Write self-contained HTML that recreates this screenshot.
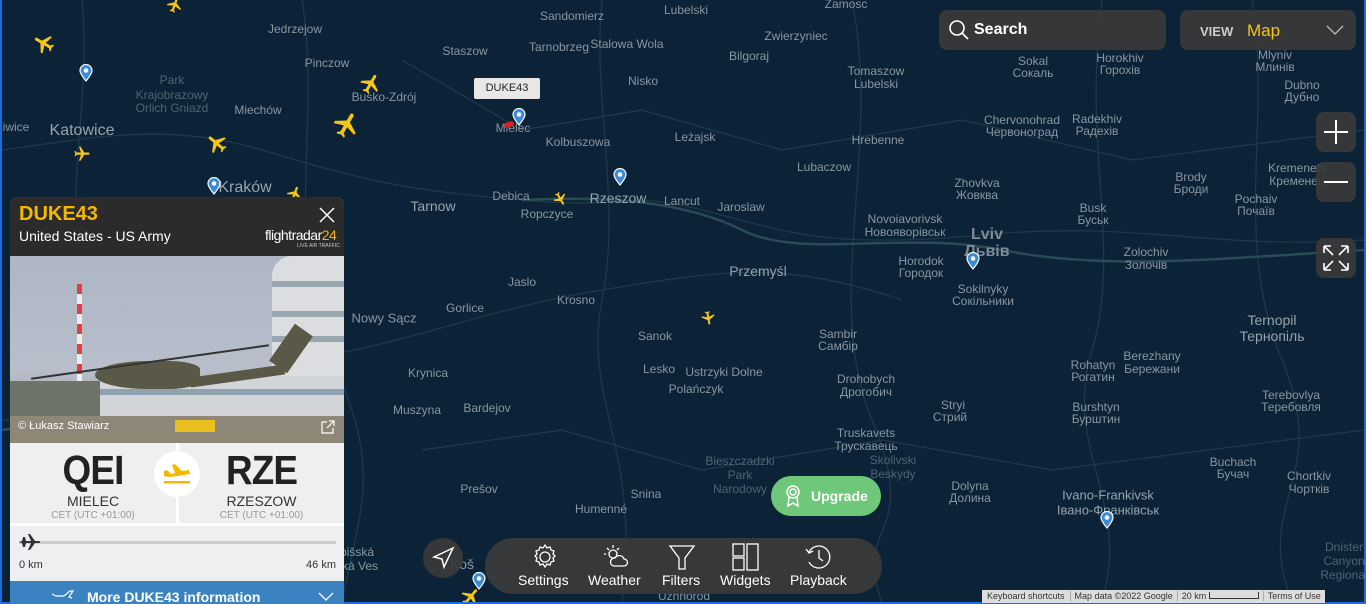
<!DOCTYPE html>
<html><head><meta charset="utf-8"><style>
*{margin:0;padding:0;box-sizing:border-box}
body{width:1366px;height:604px;overflow:hidden;background:#1a6ee0;font-family:"Liberation Sans","DejaVu Sans",sans-serif}
#map{position:absolute;left:2px;top:0;width:1362px;height:602px;background:#0c2337;overflow:hidden}
.l{position:absolute;transform:translate(-50%,-50%);color:#8a96a0;font-size:12px;white-space:nowrap;line-height:1}
.b{font-size:16px;color:#97a3ad}
.m{font-size:14px;color:#97a3ad}
.pin{position:absolute;width:14px;height:18px}
.pl{position:absolute;width:24px;height:24px}
.ctl{position:absolute;background:rgba(58,58,58,.9);border-radius:8px}
</style></head><body>
<div id="map">
<svg width="1362" height="602" style="position:absolute;left:0;top:0" fill="none">
<g stroke="#1f3a4a" stroke-width="1.2">
<path d="M0 150 C80 140 160 120 260 150 S400 190 520 200 S620 190 700 210 S820 250 980 235 S1200 250 1362 240"/>
<path d="M0 420 C100 410 180 380 300 360 S480 310 600 290 S780 260 900 300"/>
<path d="M80 0 C90 100 60 200 80 300 S60 500 70 602"/>
<path d="M300 0 C320 120 280 250 330 360 S360 500 340 602"/>
<path d="M600 0 C590 100 620 200 600 300 S640 450 620 602"/>
<path d="M850 0 C880 150 820 300 870 420 S850 520 880 602"/>
<path d="M1100 0 C1080 150 1120 250 1090 350 S1130 500 1100 602"/>
<path d="M1250 0 C1270 120 1230 240 1280 360 S1250 500 1290 602"/>
<path d="M400 60 L520 130 L640 110 L780 150 L960 120 L1130 160 L1362 130"/>
<path d="M420 450 L560 430 L700 470 L880 440 L1050 470 L1362 430"/>
</g>
<g stroke="#2a4a55" stroke-width="2.5"><path d="M520 200 C600 196 680 200 740 230 S900 230 1000 250 S1200 260 1362 250"/><path d="M0 430 C80 420 150 400 220 410"/></g>
</svg>
<div class="l" style="left:570px;top:16px">Sandomierz</div>
<div class="l" style="left:684px;top:10px">Lubelski</div>
<div class="l" style="left:844px;top:4px">Zamosc</div>
<div class="l" style="left:293px;top:29px">Jedrzejow</div>
<div class="l" style="left:463px;top:51px">Staszow</div>
<div class="l" style="left:557px;top:47px">Tarnobrzeg</div>
<div class="l" style="left:625px;top:44px">Stalowa Wola</div>
<div class="l" style="left:794px;top:36px">Zwierzyniec</div>
<div class="l" style="left:747px;top:56px">Bilgoraj</div>
<div class="l" style="left:325px;top:63px">Pinczow</div>
<div class="l" style="left:641px;top:81px">Nisko</div>
<div class="l" style="left:874px;top:71px">Tomaszow</div>
<div class="l" style="left:874px;top:84px">Lubelski</div>
<div class="l" style="left:170px;top:80px;color:#4f6370">Park</div>
<div class="l" style="left:170px;top:95px;color:#4f6370">Krajobrazowy</div>
<div class="l" style="left:170px;top:108px;color:#4f6370">Orlich Gniazd</div>
<div class="l" style="left:382px;top:97px">Busko-Zdrój</div>
<div class="l" style="left:256px;top:110px">Miechów</div>
<div class="l b" style="left:80px;top:131px">Katowice</div>
<div class="l" style="left:14px;top:127px">iwice</div>
<div class="l" style="left:511px;top:128px">Mielec</div>
<div class="l" style="left:576px;top:142px">Kolbuszowa</div>
<div class="l" style="left:693px;top:137px">Leżajsk</div>
<div class="l" style="left:876px;top:140px">Hrebenne</div>
<div class="l" style="left:822px;top:167px">Lubaczow</div>
<div class="l m" style="left:616px;top:198px">Rzeszow</div>
<div class="l" style="left:680px;top:201px">Lancut</div>
<div class="l" style="left:739px;top:207px">Jaroslaw</div>
<div class="l b" style="left:243px;top:188px">Kraków</div>
<div class="l" style="left:509px;top:196px">Debica</div>
<div class="l" style="left:545px;top:214px">Ropczyce</div>
<div class="l m" style="left:431px;top:206px">Tarnow</div>
<div class="l" style="left:903px;top:219px">Novoiavorivsk</div>
<div class="l" style="left:903px;top:232px">Новояворівськ</div>
<div class="l m" style="left:756px;top:271px">Przemyśl</div>
<div class="l" style="left:919px;top:261px">Horodok</div>
<div class="l" style="left:919px;top:273px">Городок</div>
<div class="l" style="left:520px;top:282px">Jaslo</div>
<div class="l" style="left:574px;top:300px">Krosno</div>
<div class="l" style="left:463px;top:308px">Gorlice</div>
<div class="l" style="left:382px;top:318px;font-size:13px">Nowy Sącz</div>
<div class="l" style="left:653px;top:336px">Sanok</div>
<div class="l" style="left:836px;top:334px">Sambir</div>
<div class="l" style="left:836px;top:346px">Самбір</div>
<div class="l" style="left:657px;top:369px">Lesko</div>
<div class="l" style="left:722px;top:372px">Ustrzyki Dolne</div>
<div class="l" style="left:694px;top:389px">Polańczyk</div>
<div class="l" style="left:864px;top:379px">Drohobych</div>
<div class="l" style="left:864px;top:392px">Дрогобич</div>
<div class="l" style="left:951px;top:405px">Stryi</div>
<div class="l" style="left:948px;top:417px">Стрий</div>
<div class="l" style="left:426px;top:373px">Krynica</div>
<div class="l" style="left:415px;top:410px">Muszyna</div>
<div class="l" style="left:485px;top:408px">Bardejov</div>
<div class="l" style="left:864px;top:433px">Truskavets</div>
<div class="l" style="left:864px;top:446px">Трускавець</div>
<div class="l" style="left:891px;top:460px;color:#4f6370">Skolivski</div>
<div class="l" style="left:891px;top:474px;color:#4f6370">Beskydy</div>
<div class="l" style="left:738px;top:461px;color:#4f6370">Bieszczadzki</div>
<div class="l" style="left:738px;top:475px;color:#4f6370">Park</div>
<div class="l" style="left:738px;top:489px;color:#4f6370">Narodowy</div>
<div class="l" style="left:477px;top:489px">Prešov</div>
<div class="l" style="left:644px;top:494px">Snina</div>
<div class="l" style="left:599px;top:509px">Humenné</div>
<div class="l" style="left:968px;top:486px">Dolyna</div>
<div class="l" style="left:968px;top:498px">Долина</div>
<div class="l" style="left:1106px;top:495px;font-size:13px;color:#97a3ad">Ivano-Frankivsk</div>
<div class="l" style="left:1106px;top:510px;font-size:13px;color:#97a3ad">Івано-Франківськ</div>
<div class="l" style="left:1031px;top:61px">Sokal</div>
<div class="l" style="left:1031px;top:73px">Сокаль</div>
<div class="l" style="left:1118px;top:58px">Horokhiv</div>
<div class="l" style="left:1118px;top:70px">Горохів</div>
<div class="l" style="left:1300px;top:85px">Dubno</div>
<div class="l" style="left:1300px;top:97px">Дубно</div>
<div class="l" style="left:1273px;top:55px">Mlyniv</div>
<div class="l" style="left:1273px;top:67px">Млинів</div>
<div class="l" style="left:1020px;top:120px">Chervonohrad</div>
<div class="l" style="left:1020px;top:132px">Червоноград</div>
<div class="l" style="left:1095px;top:119px">Radekhiv</div>
<div class="l" style="left:1095px;top:131px">Радехів</div>
<div class="l" style="left:975px;top:183px">Zhovkva</div>
<div class="l" style="left:975px;top:195px">Жовква</div>
<div class="l" style="left:1091px;top:208px">Busk</div>
<div class="l" style="left:1091px;top:220px">Буськ</div>
<div class="l b" style="left:985px;top:235px;font-weight:bold;color:#7d8b96">Lviv</div>
<div class="l b" style="left:985px;top:252px;font-weight:bold;color:#7d8b96">Львів</div>
<div class="l" style="left:1189px;top:177px">Brody</div>
<div class="l" style="left:1189px;top:189px">Броди</div>
<div class="l" style="left:1295px;top:168px">Kremenets</div>
<div class="l" style="left:1295px;top:181px">Кременец</div>
<div class="l" style="left:1254px;top:199px">Pochaiv</div>
<div class="l" style="left:1254px;top:211px">Почаїв</div>
<div class="l" style="left:1144px;top:252px">Zolochiv</div>
<div class="l" style="left:1144px;top:265px">Золочів</div>
<div class="l" style="left:981px;top:289px">Sokilnyky</div>
<div class="l" style="left:981px;top:301px">Сокільники</div>
<div class="l m" style="left:1270px;top:320px">Ternopil</div>
<div class="l m" style="left:1270px;top:336px">Тернопіль</div>
<div class="l" style="left:1150px;top:356px">Berezhany</div>
<div class="l" style="left:1150px;top:369px">Бережани</div>
<div class="l" style="left:1091px;top:365px">Rohatyn</div>
<div class="l" style="left:1091px;top:377px">Рогатин</div>
<div class="l" style="left:1289px;top:395px">Terebovlya</div>
<div class="l" style="left:1289px;top:407px">Теребовля</div>
<div class="l" style="left:1094px;top:407px">Burshtyn</div>
<div class="l" style="left:1094px;top:419px">Бурштин</div>
<div class="l" style="left:1231px;top:462px">Buchach</div>
<div class="l" style="left:1231px;top:474px">Бучач</div>
<div class="l" style="left:1307px;top:476px">Chortkiv</div>
<div class="l" style="left:1307px;top:489px">Чортків</div>
<div class="l" style="left:1342px;top:547px;color:#4f6370">Dnister</div>
<div class="l" style="left:1342px;top:561px;color:#4f6370">Canyon</div>
<div class="l" style="left:1342px;top:575px;color:#4f6370">Regional</div>
<div class="l" style="left:682px;top:596px">Uzhhorod</div>
<div class="l" style="left:460px;top:564px;font-size:14px">Koš</div>
<div class="l" style="left:355px;top:552px">pišská</div>
<div class="l" style="left:355px;top:566px">ská Ves</div>

<svg width="0" height="0" style="position:absolute"><defs>
<symbol id="p" viewBox="0 0 24 24"><path fill="#f5c518" d="M21 16v-2l-8-5V3.5a1.5 1.5 0 0 0-3 0V9l-8 5v2l8-2.5V19l-2 1.5V22l3.5-1 3.5 1v-1.5L13 19v-5.5z"/></symbol>
<symbol id="pn" viewBox="0 0 14 18"><path fill="#3a8ad8" stroke="#fff" stroke-width="1.2" d="M7 17C7 17 1 10 1 6.5a6 6 0 0 1 12 0C13 10 7 17 7 17z"/><circle cx="7" cy="6.5" r="2.3" fill="#fff"/></symbol>
</defs></svg>
<svg class="pl" style="left:30px;top:31px;transform:rotate(-60deg)"><use href="#p"/></svg>
<svg class="pl" style="left:164px;top:-4px;width:18px;height:18px;transform:rotate(20deg)"><use href="#p"/></svg>
<svg class="pl" style="left:357px;top:72px;transform:rotate(30deg)"><use href="#p"/></svg>
<svg class="pl" style="left:330px;top:110px;width:30px;height:30px;transform:rotate(30deg)"><use href="#p"/></svg>
<svg class="pl" style="left:203px;top:131px;transform:rotate(-50deg)"><use href="#p"/></svg>
<svg class="pl" style="left:71px;top:145px;width:18px;height:18px;transform:rotate(90deg)"><use href="#p"/></svg>
<svg class="pl" style="left:284px;top:185px;width:18px;height:18px;transform:rotate(20deg)"><use href="#p"/></svg>
<svg class="pl" style="left:550px;top:191px;width:16px;height:16px;transform:rotate(150deg)"><use href="#p"/></svg>
<svg class="pl" style="left:698px;top:310px;width:16px;height:16px;transform:rotate(170deg)"><use href="#p"/></svg>
<svg class="pl" style="left:458px;top:586px;width:22px;height:22px;transform:rotate(40deg)"><use href="#p"/></svg>
<svg class="pin" style="left:77px;top:64px"><use href="#pn"/></svg>
<svg class="pin" style="left:205px;top:177px"><use href="#pn"/></svg>
<svg class="pin" style="left:510px;top:108px"><use href="#pn"/></svg>
<svg class="pin" style="left:611px;top:168px"><use href="#pn"/></svg>
<svg class="pin" style="left:964px;top:252px"><use href="#pn"/></svg>
<svg class="pin" style="left:1098px;top:511px"><use href="#pn"/></svg>
<svg class="pin" style="left:470px;top:572px"><use href="#pn"/></svg>
<div style="position:absolute;left:472px;top:78px;width:66px;height:21px;background:#e8e8e8;color:#222;font-size:11px;text-align:center;line-height:21px;border-radius:2px">DUKE43</div>
<div style="position:absolute;left:502px;top:122px;width:10px;height:5px;background:#e02020;border-radius:3px;transform:rotate(-20deg)"></div>
</div>

<div class="ctl" style="left:939px;top:10px;width:227px;height:40px">
<svg width="22" height="22" style="position:absolute;left:9px;top:9px" fill="none" stroke="#fff" stroke-width="1.6"><circle cx="9" cy="9" r="7"/><path d="M14 14l6 6"/></svg>
<div style="position:absolute;left:35px;top:11px;color:#fff;font-weight:bold;font-size:16px">Search</div></div>
<div class="ctl" style="left:1180px;top:10px;width:176px;height:40px">
<div style="position:absolute;left:20px;top:14px;color:#ccc;font-weight:bold;font-size:13px">VIEW</div>
<div style="position:absolute;left:67px;top:11px;color:#f5c518;font-size:17px">Map</div>
<svg width="18" height="10" style="position:absolute;left:146px;top:15px" fill="none" stroke="#bbb" stroke-width="1.3"><path d="M1 1l8 8 8-8"/></svg></div>
<div class="ctl" style="left:1316px;top:112px;width:40px;height:40px"><svg width="40" height="40" stroke="#fff" stroke-width="2"><path d="M8 20h24M20 8v24"/></svg></div>
<div class="ctl" style="left:1316px;top:162px;width:40px;height:40px"><svg width="40" height="40" stroke="#fff" stroke-width="2"><path d="M8 20h24"/></svg></div>
<div class="ctl" style="left:1316px;top:238px;width:40px;height:40px"><svg width="40" height="40" fill="none" stroke="#fff" stroke-width="1.6"><path d="M8 8l9 9M8 8h7M8 8v7M32 8l-9 9M32 8h-7M32 8v7M8 32l9-9M8 32h7M8 32v-7M32 32l-9-9M32 32h-7M32 32v-7"/></svg></div>

<div style="position:absolute;left:771px;top:476px;width:110px;height:40px;background:#6fc77a;border-radius:20px;color:#fff;font-weight:bold;font-size:14px">
<svg width="20" height="24" style="position:absolute;left:12px;top:8px" fill="none" stroke="#fff" stroke-width="1.5"><circle cx="10" cy="8" r="6"/><circle cx="10" cy="8" r="3"/><path d="M6 13l-1 9 5-3 5 3-1-9"/></svg>
<span style="position:absolute;left:40px;top:12px">Upgrade</span></div>

<div style="position:absolute;left:423px;top:538px;width:40px;height:40px;border-radius:20px;background:rgba(58,58,58,.9)"><svg width="40" height="40" fill="none" stroke="#fff" stroke-width="1.5"><path d="M30 10L11 19l8 2 2 8z"/></svg></div>
<div style="position:absolute;left:485px;top:538px;width:397px;height:56px;border-radius:28px;background:rgba(58,58,58,.95);color:#fff;font-size:14px">
<svg width="30" height="30" style="position:absolute;left:45px;top:4px" fill="none" stroke="#fff" stroke-width="1.3"><circle cx="15" cy="15" r="5"/><path d="M15 3l2 3 3-1 1 3 3 1-1 3 2 2-2 2 1 3-3 1-1 3-3-1-2 3-2-3-3 1-1-3-3-1 1-3-2-2 2-2-1-3 3-1 1-3 3 1z"/></svg>
<span style="position:absolute;left:33px;top:34px">Settings</span>
<svg width="30" height="30" style="position:absolute;left:117px;top:4px" fill="none" stroke="#fff" stroke-width="1.3"><circle cx="11" cy="12" r="4"/><path d="M11 3v3M4 12H2M5 6l2 2M17 6l-2 2"/><path d="M12 24a4 4 0 0 1 1-8 5 5 0 0 1 9 1 3 3 0 0 1 0 7z"/></svg>
<span style="position:absolute;left:103px;top:34px">Weather</span>
<svg width="30" height="30" style="position:absolute;left:182px;top:4px" fill="none" stroke="#fff" stroke-width="1.3"><path d="M3 4h24L18 16v11h-6V16z"/></svg>
<span style="position:absolute;left:177px;top:34px">Filters</span>
<svg width="30" height="30" style="position:absolute;left:246px;top:4px" fill="none" stroke="#fff" stroke-width="1.3"><rect x="2" y="2" width="11" height="12"/><rect x="2" y="16" width="11" height="12"/><rect x="16" y="2" width="11" height="26"/></svg>
<span style="position:absolute;left:235px;top:34px">Widgets</span>
<svg width="30" height="30" style="position:absolute;left:319px;top:4px" fill="none" stroke="#fff" stroke-width="1.3"><path d="M5 10a11 11 0 1 1 0 10"/><path d="M2 7l3 4 4-2M15 8v8l4 3"/></svg>
<span style="position:absolute;left:305px;top:34px">Playback</span></div>

<div style="position:absolute;left:982px;top:590px;height:13px;background:#ddd;color:#333;font-size:9px;line-height:13px;white-space:nowrap">
<span style="padding:0 5px;border-right:1px solid #aaa">Keyboard shortcuts</span><span style="padding:0 4px;border-right:1px solid #aaa">Map data ©2022 Google</span><span style="padding:0 4px;border-right:1px solid #aaa">20 km <span style="display:inline-block;width:50px;height:7px;border:1px solid #333;border-top:0"></span></span><span style="padding:0 4px">Terms of Use</span></div>

<div style="position:absolute;left:10px;top:197px;width:334px;height:407px;overflow:hidden;border-radius:8px 8px 0 0;background:#eee">
<div style="height:59px;background:#2b2b2b;position:relative">
<div style="position:absolute;left:9px;top:6px;color:#f5b800;font-size:20px;font-weight:bold">DUKE43</div>
<div style="position:absolute;left:9px;top:31px;color:#fff;font-size:14px">United States - US Army</div>
<svg width="16" height="16" style="position:absolute;left:309px;top:10px" stroke="#fff" stroke-width="1.5"><path d="M1 1l14 14M15 1L1 15"/></svg>
<div style="position:absolute;left:255px;top:30px;color:#fff;font-size:14px;letter-spacing:-.5px">flightradar<span style="color:#f5b800">24</span></div>
<div style="position:absolute;left:287px;top:46px;color:#ccc;font-size:5px">LIVE AIR TRAFFIC</div></div>
<div style="height:187px;position:relative;background:linear-gradient(#aeb6c4 0%,#b8bfcb 60%,#a8aaa8 85%,#8a8270 100%);overflow:hidden">
<div style="position:absolute;left:262px;top:0;width:72px;height:170px;background:#dcdde0;border-radius:20px 0 0 0"></div>
<div style="position:absolute;left:262px;top:25px;width:72px;height:6px;background:#9aa6b0"></div>
<div style="position:absolute;left:262px;top:55px;width:72px;height:6px;background:#9aa6b0"></div>
<div style="position:absolute;left:262px;top:80px;width:72px;height:6px;background:#9aa6b0"></div>
<div style="position:absolute;left:90px;top:120px;width:244px;height:45px;background:#d2d5d8"></div>
<div style="position:absolute;left:90px;top:133px;width:244px;height:6px;background:#8fa2b0"></div>
<div style="position:absolute;left:67px;top:28px;width:5px;height:140px;background:repeating-linear-gradient(#e04040 0 10px,#eee 10px 20px)"></div>
<div style="position:absolute;left:0;top:125px;width:90px;height:45px;background:#6d7468"></div>
<div style="position:absolute;left:0;top:160px;width:334px;height:27px;background:#8e8778"></div>
<div style="position:absolute;left:85px;top:105px;width:105px;height:28px;background:#5a5846;border-radius:50% 30% 30% 50%"></div>
<div style="position:absolute;left:180px;top:115px;width:95px;height:10px;background:#5a5846;transform:rotate(-8deg)"></div>
<div style="position:absolute;left:270px;top:70px;width:22px;height:45px;background:#5a5846;transform:rotate(35deg)"></div>
<div style="position:absolute;left:20px;top:105px;width:240px;height:2px;background:#333;transform:rotate(-8deg)"></div>
<div style="position:absolute;left:8px;top:164px;color:#fff;font-size:11px">© Łukasz Stawiarz</div>
<div style="position:absolute;left:165px;top:164px;width:40px;height:12px;background:#e8c020"></div>
<svg width="14" height="14" style="position:absolute;left:311px;top:164px" fill="none" stroke="#fff" stroke-width="1.2"><path d="M6 2H1v11h11V8M8 1h5v5M13 1L6 8"/></svg></div>
<div style="height:83px;position:relative;background:#efefef;border-bottom:3px solid #fff">
<div style="position:absolute;left:166px;top:0;width:3px;height:83px;background:#fff"></div>
<div style="position:absolute;left:144px;top:8px;width:46px;height:46px;border-radius:50%;background:#fff"><svg width="46" height="46"><path fill="#f5b800" d="M10 20l3-1 4 4 4-1-3-8 3-1 7 7 7-1 1 4-20 3-6-1z"/><rect x="10" y="30" width="26" height="2.5" fill="#f5b800"/></svg></div>
<div style="position:absolute;left:0;width:166px;top:4px;text-align:center;font-size:41px;color:#222;letter-spacing:-1px;font-weight:bold;transform:scaleX(.9)">QEI</div>
<div style="position:absolute;left:0;width:166px;top:50px;text-align:center;font-size:14px;color:#333">MIELEC</div>
<div style="position:absolute;left:0;width:166px;top:67px;text-align:center;font-size:10px;color:#999">CET (UTC +01:00)</div>
<div style="position:absolute;left:169px;width:165px;top:4px;text-align:center;font-size:41px;color:#222;letter-spacing:-1px;font-weight:bold;transform:scaleX(.9)">RZE</div>
<div style="position:absolute;left:169px;width:165px;top:50px;text-align:center;font-size:14px;color:#333">RZESZOW</div>
<div style="position:absolute;left:169px;width:165px;top:67px;text-align:center;font-size:10px;color:#999">CET (UTC +01:00)</div></div>
<div style="height:55px;position:relative;background:#efeff2">
<div style="position:absolute;left:9px;top:15px;width:317px;height:3px;background:#ccc"></div>
<svg width="22" height="18" style="position:absolute;left:8px;top:7px"><path fill="#333" d="M1 9l3-1 1-4h2l1 4h5l-3-7h2l5 7h4a1 1 0 0 1 0 2h-4l-5 7h-2l3-7H8l-1 4H5l-1-4z"/></svg>
<div style="position:absolute;left:9px;top:33px;font-size:11px;color:#333">0 km</div>
<div style="position:absolute;right:8px;top:33px;font-size:11px;color:#333">46 km</div></div>
<div style="height:30px;background:#3a83c0;position:relative;color:#fff;font-size:14px;font-weight:bold">
<svg width="26" height="18" style="position:absolute;left:40px;top:5px" fill="none" stroke="#fff" stroke-width="1.2"><path d="M2 8l4 2h8l6-5h3l-4 6 3 1"/></svg>
<span style="position:absolute;left:77px;top:8px">More DUKE43 information</span>
<svg width="16" height="10" style="position:absolute;left:308px;top:11px" fill="none" stroke="#fff" stroke-width="1.3"><path d="M1 1l7 7 7-7"/></svg></div>
</div>
</body></html>
